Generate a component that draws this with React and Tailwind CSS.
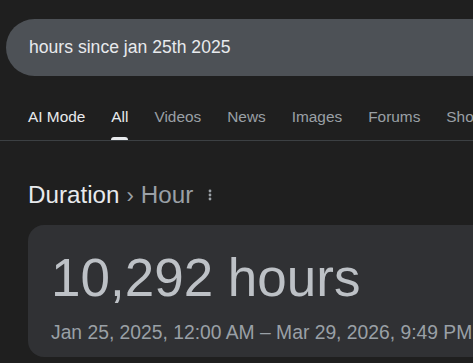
export default function App() {
  const tabs = [
    { label: "AI Mode", cls: "text-[#e8eaed]" },
    { label: "All", cls: "text-[#e8eaed]", active: true },
    { label: "Videos", cls: "text-[#9aa0a6]" },
    { label: "News", cls: "text-[#9aa0a6]" },
    { label: "Images", cls: "text-[#9aa0a6]" },
    { label: "Forums", cls: "text-[#9aa0a6]" },
    { label: "Shopping", cls: "text-[#9aa0a6]" },
  ];
  return (
    <div className="w-[473px] h-[363px] overflow-hidden bg-[#1f1f1f]" style={{ fontFamily: "'Liberation Sans', Arial, sans-serif" }}>
      <div className="pt-[19px] pl-[6px]">
        <div className="h-[57px] w-[520px] rounded-full bg-[#4d5156] flex items-center pl-[23px]">
          <span className="text-[17.6px] text-[#e8eaed]">hours since jan 25th 2025</span>
        </div>
      </div>
      <div className="mt-[30px] border-b border-[#3c4043] h-[35px] flex pl-[28px] gap-[26px] whitespace-nowrap">
        {tabs.map((t) => (
          <div key={t.label} className="relative flex flex-col">
            <span className={`text-[15.4px] leading-[21px] ${t.cls}`}>{t.label}</span>
            {t.active && <div className="absolute left-0 right-0 top-[31px] h-[3px] bg-[#e8eaed] rounded-t-sm" />}
          </div>
        ))}
      </div>
      <div className="pl-[28px] mt-[40px] flex items-center h-[28px]">
        <span className="text-[24.2px] text-[#e8eaed]">Duration</span>
        <span className="text-[22px] text-[#9aa0a6] mx-[7px]">›</span>
        <span className="text-[24.2px] text-[#9aa0a6]">Hour</span>
        <svg className="ml-[15px]" width="4" height="12" viewBox="0 0 4 12" fill="#9aa0a6">
          <circle cx="2" cy="2" r="1.4" />
          <circle cx="2" cy="6" r="1.4" />
          <circle cx="2" cy="10" r="1.4" />
        </svg>
      </div>
      <div className="ml-[28px] mt-[16px] w-[500px] h-[132px] rounded-[16px] bg-[#303134] pl-[23px] pt-[23px]">
        <div className="text-[53px] leading-[60px] text-[#bdc1c6]">10,292 hours</div>
        <div className="mt-[14px] text-[19.3px] leading-[22px] text-[#9aa0a6] whitespace-nowrap">Jan 25, 2025, 12:00 AM – Mar 29, 2026, 9:49 PM</div>
      </div>
    </div>
  );
}
